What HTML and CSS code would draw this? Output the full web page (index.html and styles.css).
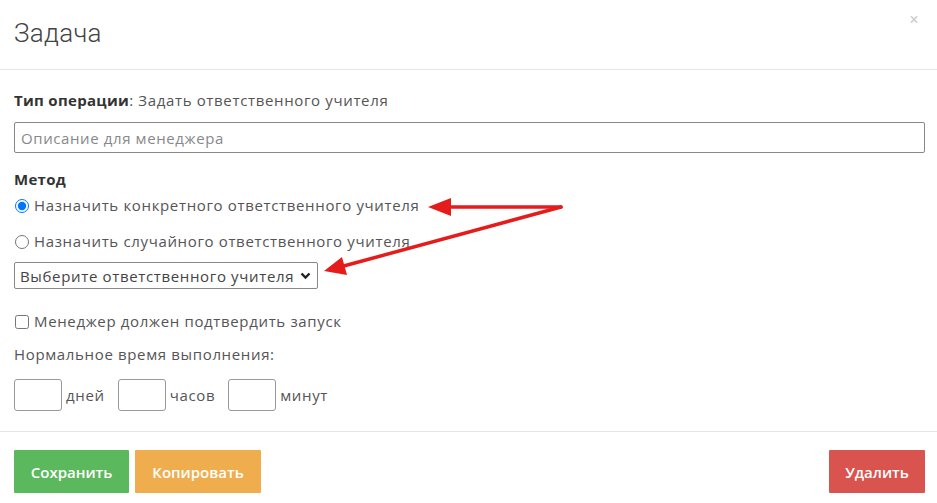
FILE: index.html
```html
<!DOCTYPE html>
<html lang="ru">
<head>
    <meta charset="UTF-8">
    <meta name="viewport" content="width=device-width, initial-scale=1.0">
    <title>Задача</title>
    <link rel="stylesheet" href="styles.css">
</head>

<body>
    <div class="modal">
        <div class="modal-header">
            <h4 class="modal-title">Задача</h4>
            <span class="close">×</span>
        </div>

        <div class="modal-body">
            <div class="row-text"><b>Тип операции</b>: Задать ответственного учителя</div>
            <input class="text-input" type="text" placeholder="Описание для менеджера">

            <div class="row-text label-bold">Метод</div>
            <label class="row-text radio-row first">
                <input type="radio" name="method" checked>Назначить конкретного ответственного учителя
            </label>
            <label class="row-text radio-row second">
                <input type="radio" name="method">Назначить случайного ответственного учителя
            </label>
            <div class="select-box">
                Выберите ответственного учителя
                <svg width="11" height="8" viewBox="0 0 11 8"><path d="M1.5 1.5 L5.5 5.5 L9.5 1.5" fill="none" stroke="#222" stroke-width="2.4"/></svg>
            </div>

            <label class="row-text check-row">
                <input type="checkbox">Менеджер должен подтвердить запуск
            </label>
            <div class="row-text time-label">Нормальное время выполнения:</div>
            <div class="time-row">
                <input class="time-input" type="text"><span>дней</span>
                <input class="time-input" type="text"><span>часов</span>
                <input class="time-input" type="text"><span>минут</span>
            </div>

            <!-- стрелки-пометки поверх формы -->
            <svg class="arrows" width="937" height="503" viewBox="0 0 937 503">
                <g stroke="#e51c1c" stroke-width="3.5" fill="none" stroke-linecap="round">
                    <line x1="561" y1="207" x2="445" y2="207"/>
                    <line x1="561" y1="207" x2="340" y2="267"/>
                </g>
                <g fill="#e51c1c">
                    <polygon points="428,207 451,198 451,216"/>
                    <polygon points="324,271 342,257 347,275"/>
                </g>
            </svg>
        </div>

        <div class="modal-footer">
            <div class="left-btns">
                <button class="btn btn-save">Сохранить</button>
                <button class="btn btn-copy">Копировать</button>
            </div>
            <button class="btn btn-delete">Удалить</button>
        </div>
    </div>
</body>

</html>
```

FILE: styles.css
```css
body {
    margin: 0;
    font-family: "Open Sans", Arial, sans-serif;
    font-size: 15px;
    letter-spacing: 0.65px;
    color: #555;
    background: #fff;
}

.modal {
    position: relative;
    width: 937px;
    height: 503px;
}

.modal-header {
    height: 69px;
    border-bottom: 1px solid #e5e5e5;
    padding: 0 14px;
    display: flex;
    align-items: center;
    justify-content: space-between;
}

.modal-title {
    margin: 0;
    font-family: Roboto, sans-serif;
    font-weight: 300;
    font-size: 26px;
    letter-spacing: 0.3px;
    color: #444;
    padding-bottom: 4px;
}

.close {
    font-family: Roboto, sans-serif;
    font-size: 16px;
    color: #ccc;
    align-self: flex-start;
    margin-top: 10px;
    margin-right: 4px;
}

.modal-body {
    padding: 20px 12px 20px 14px;
    border-bottom: 1px solid #e5e5e5;
}

.row-text {
    display: block;
    line-height: 20px;
    height: 20px;
}

.row-text b,
.label-bold {
    font-weight: 700;
    color: #333;
    letter-spacing: 0.3px;
}

.label-bold {
    margin-top: 16px;
}

.text-input {
    display: block;
    box-sizing: border-box;
    width: 911px;
    height: 31px;
    margin-top: 12px;
    padding: 0 6px;
    border: 1px solid #888;
    border-radius: 2px;
    font-family: inherit;
    font-size: 15px;
    letter-spacing: 0.6px;
}

.text-input::placeholder {
    color: #888;
}

.radio-row input,
.check-row input {
    margin: 0 5px 0 1px;
    width: 14px;
    height: 14px;
    vertical-align: -2px;
}

.first {
    margin-top: 6px;
}

.second {
    margin-top: 16px;
}

.select-box {
    box-sizing: border-box;
    display: inline-flex;
    align-items: center;
    gap: 6px;
    height: 27px;
    margin-top: 11px;
    padding: 0 6px 0 5px;
    border: 1px solid #888;
    border-radius: 2px;
    color: #444;
}

.check-row {
    margin-top: 22px;
}

.time-label {
    margin-top: 13px;
}

.time-row {
    display: flex;
    align-items: center;
    margin-top: 15px;
}

.time-input {
    box-sizing: border-box;
    width: 48px;
    height: 32px;
    border: 1px solid #999;
    border-radius: 3px;
    margin: 0 4px 0 0;
}

.time-row span {
    margin-right: 13px;
}

.arrows {
    position: absolute;
    left: 0;
    top: 0;
    pointer-events: none;
}

.modal-footer {
    display: flex;
    justify-content: space-between;
    padding: 18px 12px 0 14px;
}

.left-btns {
    display: flex;
    gap: 6px;
}

.btn {
    height: 43px;
    border: none;
    border-radius: 1px;
    color: #fff;
    font-family: "Open Sans", Arial, sans-serif;
    font-size: 15px;
    font-weight: 600;
    letter-spacing: 0;
    padding: 0;
}

.btn-save {
    width: 115px;
    background: #5cb85c;
}

.btn-copy {
    width: 126px;
    background: #f0ad4e;
}

.btn-delete {
    width: 96px;
    background: #d9534f;
}
```
